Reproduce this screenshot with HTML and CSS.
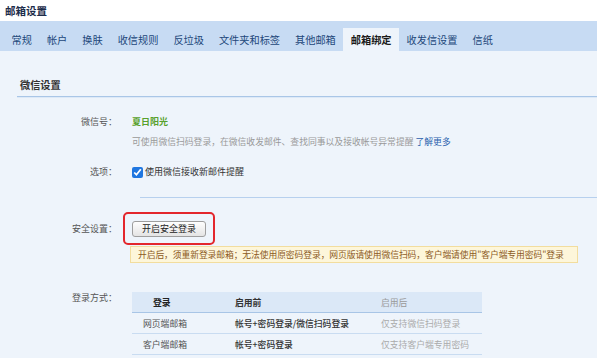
FILE: index.html
```html
<!DOCTYPE html>
<html lang="zh-CN">

<head>
    <meta charset="UTF-8">
    <meta name="viewport" content="width=device-width, initial-scale=1.0">
    <title>邮箱设置</title>
    <link rel="stylesheet" href="styles.css">
</head>

<body>
    <h1 class="page-title">邮箱设置</h1>

    <nav class="tabs">
        <a class="tab">常规</a>
        <a class="tab">帐户</a>
        <a class="tab">换肤</a>
        <a class="tab">收信规则</a>
        <a class="tab">反垃圾</a>
        <a class="tab">文件夹和标签</a>
        <a class="tab">其他邮箱</a>
        <a class="tab active">邮箱绑定</a>
        <a class="tab">收发信设置</a>
        <a class="tab">信纸</a>
    </nav>

    <main class="content">
        <h2 class="section-title">微信设置</h2>

        <div class="form">
            <div class="label row-wx">微信号：</div>
            <div class="value row-wx">
                <div class="wx-name">夏日阳光</div>
                <p class="desc">可使用微信扫码登录，在微信收发邮件、查找同事以及接收帐号异常提醒 <a class="link">了解更多</a></p>
            </div>

            <div class="label row-opt">选项：</div>
            <div class="value row-opt">
                <label class="check">
                    <input type="checkbox" checked>
                    <span>使用微信接收新邮件提醒</span>
                </label>
            </div>

            <div class="divider"></div>

            <div class="label row-sec">安全设置：</div>
            <div class="value row-sec">
                <div class="highlight">
                    <button type="button" class="btn">开启安全登录</button>
                </div>
                <div class="notice">开启后，须重新登录邮箱；无法使用原密码登录，网页版请使用微信扫码，客户端请使用"客户端专用密码"登录</div>
            </div>

            <div class="label row-login">登录方式：</div>
            <div class="value row-login">
                <table class="login-table">
                    <colgroup>
                        <col class="w1">
                        <col class="w2">
                        <col class="w3">
                    </colgroup>
                    <thead>
                        <tr>
                            <th class="c1">登录</th>
                            <th class="c2">启用前</th>
                            <th class="c3">启用后</th>
                        </tr>
                    </thead>
                    <tbody>
                        <tr>
                            <td class="c1">网页端邮箱</td>
                            <td class="c2">帐号+密码登录/微信扫码登录</td>
                            <td class="c3">仅支持微信扫码登录</td>
                        </tr>
                        <tr>
                            <td class="c1">客户端邮箱</td>
                            <td class="c2">帐号+密码登录</td>
                            <td class="c3">仅支持客户端专用密码</td>
                        </tr>
                    </tbody>
                </table>
            </div>
        </div>
    </main>
</body>

</html>
```

FILE: styles.css
```css
body {
    margin: 0;
    font-family: "Noto Sans CJK SC", "Noto Sans", sans-serif;
    font-size: 9px;
    color: #444;
    background-color: #eef4fb;
    overflow: hidden;
}

.page-title {
    margin: 0;
    height: 21px;
    padding-left: 5px;
    line-height: 21px;
    font-size: 10.5px;
    font-weight: bold;
    color: #1c2c4a;
    background-color: #fff;
}

.tabs {
    display: flex;
    height: 30px;
    padding: 7px 0 0 4px;
    box-sizing: border-box;
    background-color: #c7dbf3;
}

.tab {
    padding: 0 7.5px;
    height: 23px;
    line-height: 23px;
    font-size: 10.2px;
    color: #22477a;
}

.tab.active {
    background-color: #eef4fb;
    color: #1a1a1a;
    font-weight: bold;
}

.content {
    padding: 23px 0 0 17px;
}

.section-title {
    margin: 0;
    height: 22px;
    padding-left: 3px;
    line-height: 22px;
    font-size: 10.2px;
    font-weight: bold;
    color: #333;
    border-bottom: 1px solid #a9c6e7;
    box-shadow: 0 1px 0 #dde9f7;
}

.form {
    display: grid;
    grid-template-columns: 100px 1fr;
    column-gap: 15px;
}

.label {
    text-align: right;
    color: #555;
    line-height: 16px;
}

.row-wx {
    margin-top: 17px;
}

.wx-name {
    line-height: 16px;
    color: #58a12c;
    font-weight: bold;
}

.desc {
    margin: 4px 0 0;
    line-height: 16px;
    font-size: 8.8px;
    color: #999;
}

.link {
    color: #2b5fad;
}

.row-opt {
    margin-top: 14px;
    line-height: 16px;
}

.check {
    display: flex;
    align-items: center;
    gap: 2px;
    color: #333;
}

.check input {
    width: 11px;
    height: 11px;
    margin: 0;
    accent-color: #1f76e0;
}

.divider {
    grid-column: 1 / -1;
    margin: 17px 0 0 123px;
    border-top: 1px solid #b7d0ee;
}

.row-sec {
    margin-top: 14px;
}

.label.row-sec {
    line-height: 33px;
}

.highlight {
    display: inline-block;
    margin-left: -9px;
    padding: 7px 7px 6px;
    border: 2px solid #e3262c;
    border-radius: 5px;
}

.btn {
    display: block;
    height: 16px;
    padding: 0 9px;
    font-family: inherit;
    font-size: 9px;
    line-height: 14px;
    color: #222;
    background: linear-gradient(#fefefe, #e4e4e4);
    border: 1px solid #9e9e9e;
    border-radius: 3px;
}

.notice {
    width: 448px;
    height: 17px;
    margin: 1px 0 0 -2px;
    padding-left: 7px;
    line-height: 15px;
    box-sizing: border-box;
    white-space: nowrap;
    overflow: hidden;
    font-size: 8.8px;
    letter-spacing: -0.1px;
    color: #8c5a1e;
    background-color: #fdf6da;
    border: 1px solid #f2dd9e;
}

.row-login {
    margin-top: 29px;
}

.label.row-login {
    line-height: 12px;
}

.login-table {
    width: 350px;
    table-layout: fixed;
    border-collapse: collapse;
    font-size: 8.8px;
}

.w1 {
    width: 93px;
}

.w2 {
    width: 145px;
}

.w3 {
    width: 112px;
}

.login-table th,
.login-table td {
    height: 20px;
    padding: 0;
    text-align: left;
    white-space: nowrap;
    font-weight: normal;
    border-bottom: 1px solid #c9dcf1;
}

.login-table th {
    background-color: #dbe8f7;
    border-bottom-color: #a8c5e6;
    color: #222;
    font-weight: bold;
}

.login-table .c1 {
    padding-left: 11px;
    color: #555;
}

.login-table th.c1 {
    padding-left: 21px;
    color: #222;
}

.login-table .c2 {
    padding-left: 10px;
    color: #333;
    font-weight: 500;
}

.login-table th.c2 {
    font-weight: bold;
}

.login-table .c3 {
    padding-left: 11px;
    color: #aaa;
}

.login-table th.c3 {
    font-weight: normal;
    color: #999;
}
```
